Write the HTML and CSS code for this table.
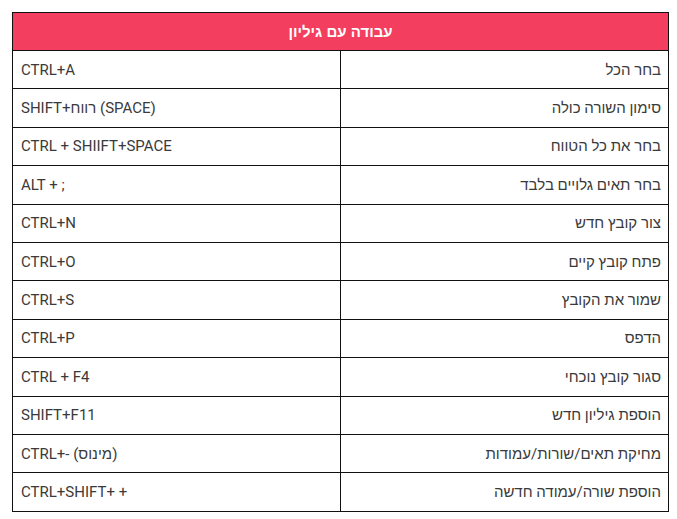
FILE: index.html
```html
<!DOCTYPE html>
<html lang="he">
<head>
<meta charset="utf-8">
<link rel="stylesheet" href="styles.css">
</head>
<body>
<div class="wrap">
<table class="shortcuts" dir="rtl">
  <thead>
    <tr><th colspan="2">עבודה עם גיליון</th></tr>
  </thead>
  <tbody>
    <tr><td class="desc">בחר הכל</td><td class="key" dir="ltr">CTRL+A</td></tr>
    <tr><td class="desc">סימון השורה כולה</td><td class="key" dir="ltr">SHIFT+רווח (SPACE)</td></tr>
    <tr><td class="desc">בחר את כל הטווח</td><td class="key" dir="ltr">CTRL + SHIIFT+SPACE</td></tr>
    <tr><td class="desc">בחר תאים גלויים בלבד</td><td class="key" dir="ltr">ALT + ;</td></tr>
    <tr><td class="desc">צור קובץ חדש</td><td class="key" dir="ltr">CTRL+N</td></tr>
    <tr><td class="desc">פתח קובץ קיים</td><td class="key" dir="ltr">CTRL+O</td></tr>
    <tr><td class="desc">שמור את הקובץ</td><td class="key" dir="ltr">CTRL+S</td></tr>
    <tr><td class="desc">הדפס</td><td class="key" dir="ltr">CTRL+P</td></tr>
    <tr><td class="desc">סגור קובץ נוכחי</td><td class="key" dir="ltr">CTRL + F4</td></tr>
    <tr><td class="desc">הוספת גיליון חדש</td><td class="key" dir="ltr">SHIFT+F11</td></tr>
    <tr><td class="desc">מחיקת תאים/שורות/עמודות</td><td class="key" dir="ltr">CTRL+- (מינוס)</td></tr>
    <tr><td class="desc">הוספת שורה/עמודה חדשה</td><td class="key" dir="ltr">CTRL+SHIFT+ +</td></tr>
  </tbody>
</table>
</div>
</body>
</html>
```
FILE: styles.css
```css
html, body {
  margin: 0;
  padding: 0;
  background: #ffffff;
}
.wrap {
  padding: 12px 0 0 12px;
}
.shortcuts {
  width: 657px;
  border-collapse: collapse;
  table-layout: fixed;
  font-family: Roboto, "Liberation Sans", sans-serif;
  font-size: 15px;
  color: #3a3a3a;
}
.shortcuts th {
  background: #f43e5f;
  color: #ffffff;
  font-family: "Liberation Sans", Arial, sans-serif;
  font-weight: bold;
  font-size: 15px;
  height: 37px;
  padding: 0;
  border: 1px solid #111111;
  text-align: center;
}
.shortcuts td {
  height: 37.4px;
  padding: 0 7px 0 8px;
  border: 1px solid #111111;
  vertical-align: middle;
  white-space: nowrap;
}
.shortcuts td.desc {
  text-align: right;
}
.shortcuts td.key {
  text-align: left;
}
```
